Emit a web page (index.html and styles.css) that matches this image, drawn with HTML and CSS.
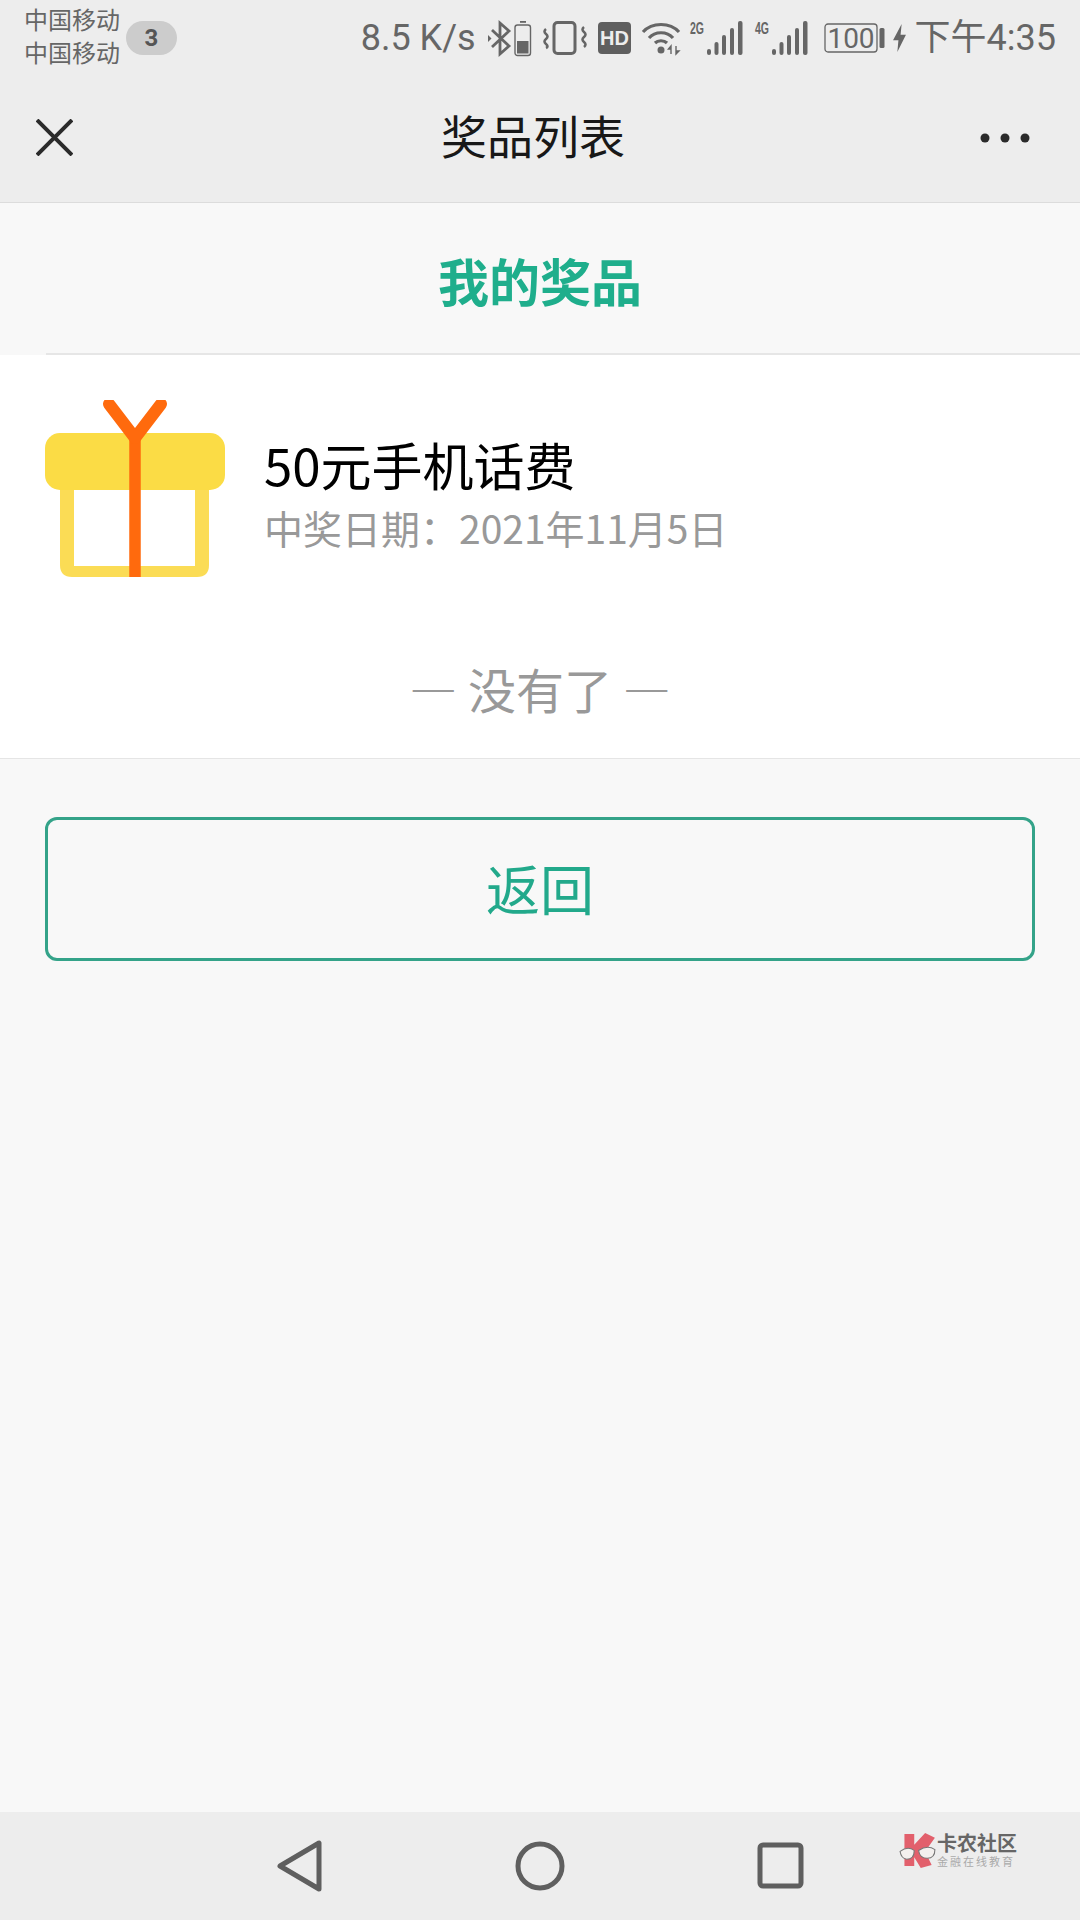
FILE: index.html
```html
<!DOCTYPE html>
<html lang="zh-CN">
<head>
<meta charset="utf-8">
<title>奖品列表</title>
<link rel="stylesheet" href="styles.css">
</head>
<body>
<div class="page">
  <header class="chrome">
    <div class="status">
      <div class="carriers"><span>中国移动</span><span>中国移动</span></div>
      <span class="badge">3</span>
      <div class="status-right">
        <span class="speed">8.5 K/s</span>
        <svg class="ic" width="23" height="35" viewBox="0 0 23 35"><path d="M4 9 L21 25 L12 33 V2 L21 10 L4 26" fill="none" stroke="#666" stroke-width="2.8"/><path d="M0 14 L3.500 17.500 L0 21 Z" fill="#666"/></svg>
        <svg class="ic ic-m3" width="18" height="35" viewBox="0 0 18 35"><rect x="6" y="0" width="6" height="1.8" fill="#666"/><rect x="1" y="4" width="15.500" height="30.500" rx="2.500" fill="none" stroke="#666" stroke-width="1.400"/><rect x="3" y="20" width="11.500" height="12.500" fill="#666"/></svg>
        <svg class="ic ic-m11" width="44" height="34" viewBox="0 0 44 34"><rect x="11" y="1.500" width="21" height="31" rx="3.500" fill="none" stroke="#666" stroke-width="3"/><path d="M3 8 q-3 2.500 0 5 q3 2.500 0 5 q-3 2.500 0 5 q3 2.500 0 4 M41 6 q-3 2.500 0 5 q3 2.500 0 5 q-3 2.500 0 5 q3 2.500 0 5" fill="none" stroke="#666" stroke-width="2.600"/></svg>
        <svg class="ic ic-m11" width="33" height="34" viewBox="0 0 33 34"><rect x="0" y="1" width="33" height="32" rx="4" fill="#5f5f5f"/><text x="16.500" y="24" class="hd">HD</text></svg>
        <svg class="ic ic-m10" width="41" height="34" viewBox="0 0 41 34"><path d="M2 11 C11 1 29 1 38 11 M8 17 C14 10 26 10 32 17 M14 22 C17 19 23 19 26 22" fill="none" stroke="#666" stroke-width="3.200"/><circle cx="20" cy="29" r="3.500" fill="#666"/><path d="M30 33 V25 M35 33 V25 M27.500 28 L30 25 L30 28 Z M35 33 L35 30 L38 30 Z" fill="#666" stroke="#666" stroke-width="1.400"/></svg>
        <svg class="ic ic-m8" width="53" height="34" viewBox="0 0 53 34"><text x="0" y="13" class="net" textLength="14" lengthAdjust="spacingAndGlyphs">2G</text><g fill="#666"><rect x="17" y="28" width="4" height="6" rx="2"/><rect x="24.500" y="21" width="4" height="13" rx="2"/><rect x="32" y="14" width="4" height="20" rx="2"/><rect x="40" y="7" width="4" height="27" rx="2"/><rect x="48" y="0" width="4.500" height="34" rx="2"/></g></svg>
        <svg class="ic ic-m12" width="53" height="34" viewBox="0 0 53 34"><text x="0" y="13" class="net" textLength="14" lengthAdjust="spacingAndGlyphs">4G</text><g fill="#666"><rect x="17" y="28" width="4" height="6" rx="2"/><rect x="24.500" y="21" width="4" height="13" rx="2"/><rect x="32" y="14" width="4" height="20" rx="2"/><rect x="40" y="7" width="4" height="27" rx="2"/><rect x="48" y="0" width="4.500" height="34" rx="2"/></g></svg>
        <svg class="ic ic-m16" width="61" height="30" viewBox="0 0 61 30"><rect x="1" y="1" width="52" height="28" rx="3" fill="none" stroke="#666" stroke-width="1.300"/><text x="27" y="25" class="pct">100</text><rect x="55.500" y="5" width="5" height="20" rx="1.500" fill="#666"/></svg>
        <svg class="ic ic-m8" width="13" height="28" viewBox="0 0 12 26"><path d="M8 0 L0 15 H5 L4 26 L12 10 H7 Z" fill="#666"/></svg>
        <span class="time">下午4:35</span>
      </div>
    </div>
    <div class="navbar">
      <svg width="37" height="37" viewBox="0 0 37 37"><path d="M1 1 L36 36 M36 1 L1 36" stroke="#2a2a2a" stroke-width="4" fill="none"/></svg>
      <h1 class="nav-title">奖品列表</h1>
      <svg class="more" width="50" height="10" viewBox="0 0 50 10"><circle cx="5" cy="5" r="4.500" fill="#2a2a2a"/><circle cx="25" cy="5" r="4.500" fill="#2a2a2a"/><circle cx="45" cy="5" r="4.500" fill="#2a2a2a"/></svg>
    </div>
  </header>

  <main class="content">
    <div class="heading"><h2 class="heading-text">我的奖品</h2></div>
    <section class="list">
      <div class="item">
        <svg class="gift" width="180" height="177" viewBox="0 0 180 177">
          <path d="M15 50 H164 V165 Q164 177 152 177 H27 Q15 177 15 165 Z" fill="#fbdc55"/>
          <rect x="29" y="80" width="121" height="86" fill="#fff"/>
          <rect x="0" y="33" width="180" height="57" rx="15" fill="#fbdc45"/>
          <path d="M90 177 V36" fill="none" stroke="#ff6a0d" stroke-width="11.500"/>
          <path d="M64 4 L90 38 L116 4" fill="none" stroke="#ff6a0d" stroke-width="12" stroke-linecap="round" stroke-linejoin="round"/>
        </svg>
        <div class="item-text">
          <div class="item-name">50元手机话费</div>
          <div class="item-date">中奖日期：2021年11月5日</div>
        </div>
      </div>
      <div class="end">— 没有了 —</div>
    </section>
    <div class="actions"><a class="btn">返回</a></div>
  </main>

  <footer class="sysnav">
    <svg width="60" height="60" viewBox="0 0 60 60"><path d="M49 7 V53 L10 30 Z" fill="none" stroke="#5f5f5f" stroke-width="5" stroke-linejoin="round"/></svg>
    <svg width="60" height="60" viewBox="0 0 60 60"><circle cx="30" cy="30" r="22" fill="none" stroke="#5f5f5f" stroke-width="5"/></svg>
    <svg width="60" height="60" viewBox="0 0 60 60"><rect x="10" y="9" width="41" height="41" rx="3" fill="none" stroke="#5f5f5f" stroke-width="5"/></svg>
    <div class="logo">
      <svg width="37" height="37" viewBox="0 0 34 38" preserveAspectRatio="none"><path d="M5 2 H14 V13 L24 1 L33 6 L24 20 L30 34 L20 37 L14 26 V35 H5 Z" fill="#e2606c"/><path d="M1 20 Q8 14 14 19 Q14 28 7 28 Q2 27 1 20 Z M18 19 Q26 13 33 18 Q33 27 26 27 Q19 27 18 19 Z" fill="#f3f0ee" stroke="#777" stroke-width="1"/></svg>
      <div class="logo-text"><span class="logo-name">卡农社区</span><span class="logo-sub">金融在线教育</span></div>
    </div>
  </footer>
</div>
</body>
</html>
```
FILE: styles.css
```css
* { box-sizing: border-box; }
html, body { margin: 0; padding: 0; }
body { font-family: "Noto Sans CJK SC", "Noto Sans", sans-serif; background: #f8f8f8; }
.page { width: 1080px; height: 1920px; display: flex; flex-direction: column; overflow: hidden; }

.chrome { background: #ededed; height: 203px; border-bottom: 1px solid #dcdcdc; flex: none; }
.status { height: 74px; display: flex; align-items: center; padding: 0 24px 0 24px; color: #666; font-family: Roboto, "Noto Sans CJK SC", sans-serif; }
.carriers { display: flex; flex-direction: column; font-size: 24px; line-height: 33px; width: 102px; padding-top: 1px; }
.badge { width: 51px; height: 34px; border-radius: 17px; background: #ccc; color: #555; font-size: 24px; font-weight: 700; display: flex; align-items: center; justify-content: center; margin-top: 1px; }
.status-right { margin-left: auto; display: flex; align-items: center; padding-top: 2px; }
.speed { font-size: 36px; line-height: 48px; margin-right: 12px; }
.ic { display: block; flex: none; overflow: visible; }
.ic-m3 { margin-left: 3px; }
.ic-m8 { margin-left: 8px; }
.ic-m10 { margin-left: 10px; }
.ic-m11 { margin-left: 11px; }
.ic-m12 { margin-left: 12px; }
.ic-m16 { margin-left: 16px; }
.time { font-size: 36px; line-height: 48px; margin-left: 9px; }
.hd { font: 700 20px "Liberation Sans", sans-serif; fill: #ededed; text-anchor: middle; }
.net { font: 700 16px "Liberation Sans", sans-serif; fill: #666; }
.pct { font: 400 28px Roboto, sans-serif; fill: #666; text-anchor: middle; }

.navbar { height: 129px; display: grid; grid-template-columns: 1fr auto 1fr; align-items: center; padding: 0 50px 0 36px; margin-top: -1px; }
.nav-title { margin: 0; padding-bottom: 7px; font-size: 46px; font-weight: 400; color: #181818; line-height: 60px; }
.more { justify-self: end; }

.content { flex: 1; display: flex; flex-direction: column; }
.heading { height: 152px; margin-left: 46px; display: flex; align-items: center; justify-content: center; padding: 3px 46px 0 0; border-bottom: 2px solid #e6e6e6; }
.heading-text { margin: 0; font-size: 51px; line-height: 66px; font-weight: 700; color: #1fae8c; }

.list { background: #fff; border-bottom: 1px solid #e5e5e5; height: 404px; }
.item { display: flex; align-items: flex-start; gap: 39px; padding: 45px 45px 0; }
.gift { display: block; flex: none; }
.item-text { padding-top: 31px; }
.item-name { font-size: 51px; line-height: 66px; color: #000; }
.item-date { font-size: 39px; line-height: 60px; color: #999; }
.end { margin-top: 71px; font-size: 48px; line-height: 80px; text-align: center; color: #999; }

.actions { padding: 58px 45px 0; flex: 1; }
.btn { display: flex; align-items: center; justify-content: center; height: 144px; padding-bottom: 3px; border: 3px solid #34a389; border-radius: 12px; font-size: 54px; color: #22a98b; }

.sysnav { position: relative; height: 108px; background: #ededed; display: flex; align-items: center; justify-content: center; gap: 180px; flex: none; }
.logo { position: absolute; left: 899px; top: 20px; display: flex; align-items: flex-start; gap: 1px; }
.logo-text { display: flex; flex-direction: column; gap: 0; padding-top: 1px; font-family: "Liberation Sans", "Noto Sans CJK SC", sans-serif; }
.logo-name { font-size: 20px; line-height: 23px; font-weight: 700; color: #666; }
.logo-sub { font-size: 11px; line-height: 13px; letter-spacing: 2px; color: #aaa; }
```
